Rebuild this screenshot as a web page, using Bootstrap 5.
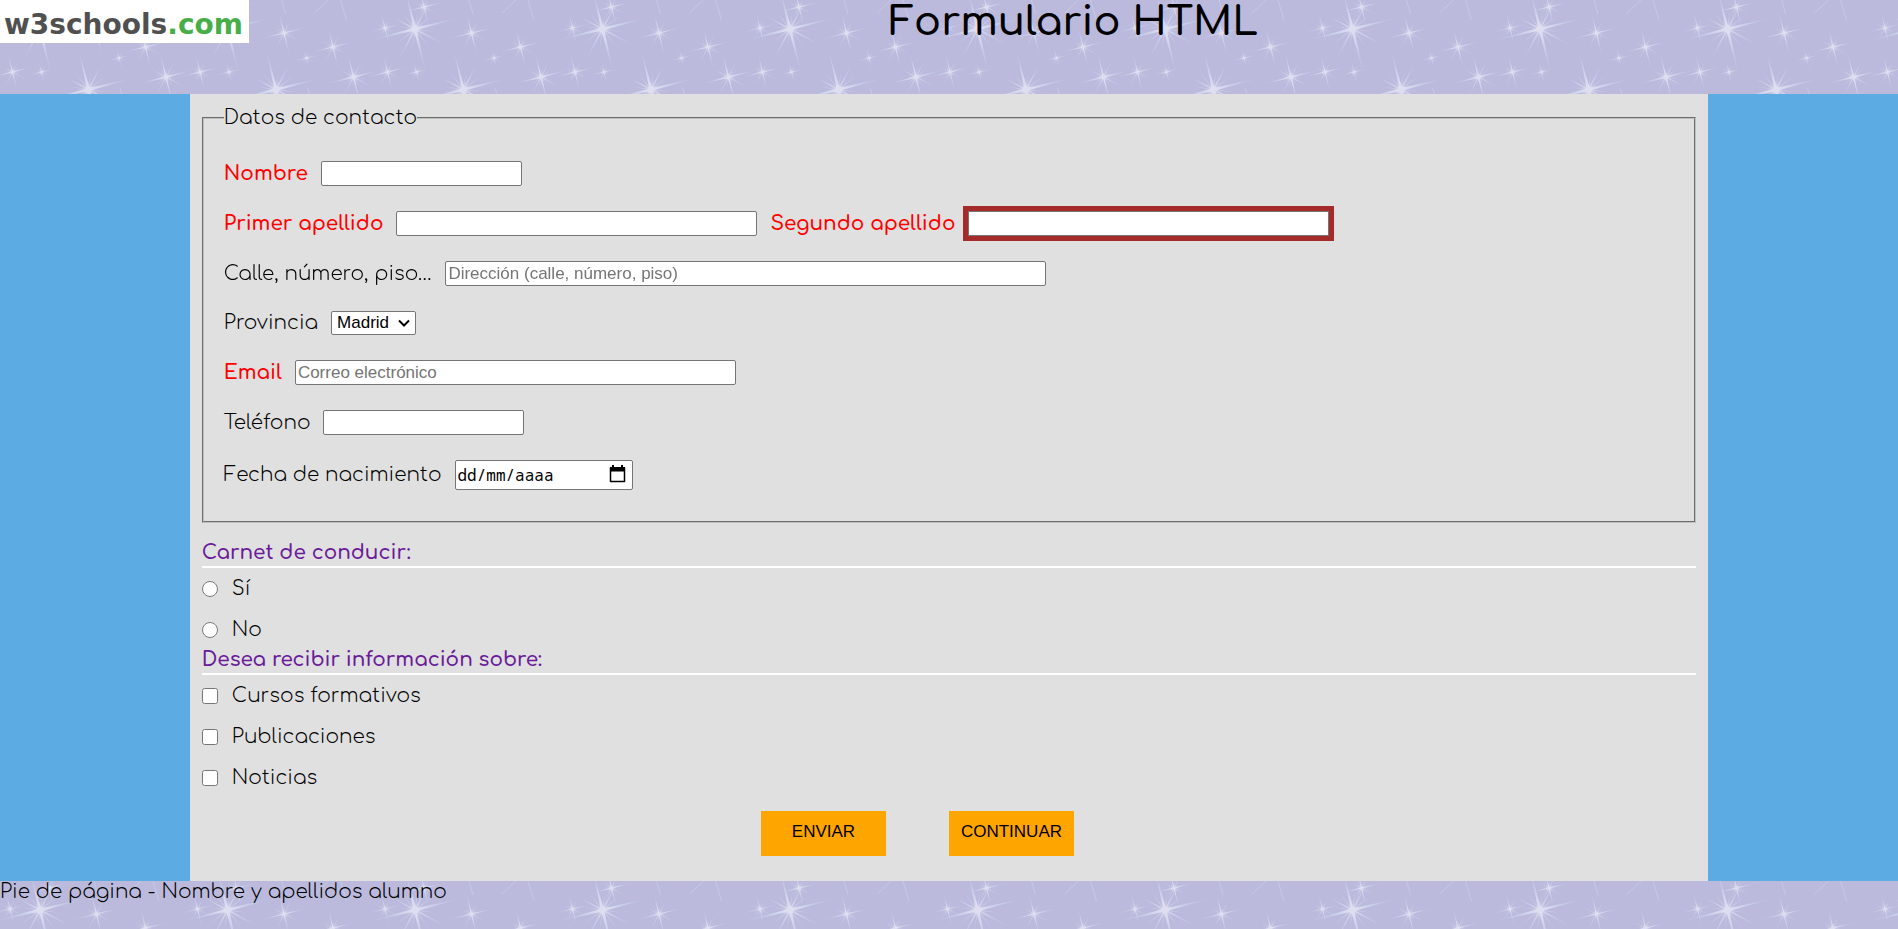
<!DOCTYPE html>
<html lang="es">
<head>
<meta charset="utf-8">
<meta name="viewport" content="width=device-width, initial-scale=1">
<title>Formulario HTML</title>
<link href="https://cdn.jsdelivr.net/npm/bootstrap@5.3.0/dist/css/bootstrap.min.css" rel="stylesheet">
<style>
  body {
    background-color: #5dabe3;
    color: #000;
    font-family: Comfortaa, Inter, sans-serif;
    font-size: 20px;
    font-weight: 300;
    line-height: 25px;
  }
  .stars {
    background-color: #bbbadd;
    background-size: 375px 188px;
    background-image: url("data:image/svg+xml,%3Csvg xmlns='http://www.w3.org/2000/svg' xmlns:xlink='http://www.w3.org/1999/xlink' width='375' height='188' viewBox='0 0 375 188'%3E%3Cdefs%3E%3CradialGradient id='g' gradientUnits='userSpaceOnUse' cx='0' cy='0' r='46'%3E%3Cstop offset='0' stop-color='%23e2e2f3'/%3E%3Cstop offset='.4' stop-color='%23ccd2ec' stop-opacity='.9'/%3E%3Cstop offset='1' stop-color='%23bcc4e4' stop-opacity='.3'/%3E%3C/radialGradient%3E%3Cg id='s' fill='url(%23g)'%3E%3Cpath d='M-46 0L0-1.600L46 0L0 1.600ZM0-38L1.600 0L0 46L-1.600 0Z' transform='rotate(-14)'/%3E%3Cpath d='M-24 0L0-1.200L34 0L0 1.200ZM0-26L1.200 0L0 34L-1.200 0Z' transform='rotate(28)' opacity='.7'/%3E%3Cpath d='M-22 0L0-.8L24 0L0 .8ZM0-22L.8 0L0 24L-.8 0Z' transform='rotate(52)' opacity='.5'/%3E%3Cpath d='M-18 0L0-.8L20 0L0 .8ZM0-18L.8 0L0 20L-.8 0Z' transform='rotate(8)' opacity='.5'/%3E%3Ccircle r='3.500' fill='%23dedef0'/%3E%3C/g%3E%3Cg id='t'%3E%3Cuse xlink:href='%23s' x='40' y='29'/%3E%3Cuse xlink:href='%23s' x='88.500' y='89.500'/%3E%3Cuse xlink:href='%23s' transform='translate(166 77) scale(.62)'/%3E%3Cuse xlink:href='%23s' transform='translate(96.500 33) scale(.52)'/%3E%3Cuse xlink:href='%23s' transform='translate(145.500 47) scale(.5)'/%3E%3Cuse xlink:href='%23s' transform='translate(49 7) scale(.45)'/%3E%3Cuse xlink:href='%23s' transform='translate(12.500 72) scale(.45)'/%3E%3Cuse xlink:href='%23s' transform='translate(10 28) scale(.4)'/%3E%3Cuse xlink:href='%23s' transform='translate(119 58) scale(.27)'/%3E%3Cuse xlink:href='%23s' transform='translate(41.500 72) scale(.3)'/%3E%3Cpath d='M94 0L98 14M153 0L159 20M127 13L141 0M120 88L122 94' stroke='%23c8cfea' stroke-width='1' opacity='.7' fill='none'/%3E%3C/g%3E%3C/defs%3E%3Cuse xlink:href='%23t' x='-187.500'/%3E%3Cuse xlink:href='%23t'/%3E%3Cuse xlink:href='%23t' x='187.500'/%3E%3Cuse xlink:href='%23t' x='375'/%3E%3C/svg%3E");
  }
  .site-header { min-height: 94px; }
  .site-footer { min-height: 48px; line-height: 22px; }
  .logo svg { display: block; }
  .page-title { font-size: 40px; font-weight: 600; line-height: 44px; }
  .page-main { width: 80%; background-color: #e0e0e0; padding: 11px 12px 25px; }
  .contact { border: 2px groove #c0c0c0; padding: 30px 20px 31px; }
  .contact legend { float: none; width: auto; font-size: 20px; line-height: 26px; }
  .fields { gap: 25px; }
  .pair { gap: 13px; }
  .pair label { line-height: 22px; }
  .required { color: #f00; font-weight: 600; }
  .field {
    height: 25px;
    border: 1px solid #767676;
    border-radius: 2px;
    background-color: #fff;
    color: #000;
    padding: 1px 2px;
    font: 400 17px "Liberation Sans", Arial, sans-serif;
  }
  .field::placeholder { color: #757575; opacity: 1; }
  .w-short { width: 201px; }
  .w-name { width: 361px; }
  .w-email { width: 441px; }
  .w-address { width: 601px; }
  .w-province { width: 85px; height: 24px; }
  .w-date { width: 178px; height: 30px; }
  .current { border-radius: 0; }
  .current, .field:focus { outline: 5px solid brown; }
  select.field {
    appearance: none;
    padding: 0 4px 1px 5px;
    background: #fff url("data:image/svg+xml,%3Csvg xmlns='http://www.w3.org/2000/svg' width='12' height='8'%3E%3Cpath d='M1 1.500L6 6.500L11 1.500' fill='none' stroke='%23000' stroke-width='2'/%3E%3C/svg%3E") no-repeat right 5px center;
  }
  .date-field { font-family: "Noto Sans Mono", "DejaVu Sans Mono", monospace; font-size: 16px; }
  .date-field::placeholder { color: #000; }
  .date-icon { right: 7px; top: 5px; }
  .section-title {
    color: #6a1b9a;
    font-size: 20px;
    font-weight: 600;
    line-height: 22px;
    border-bottom: 2px solid #fff;
    padding-bottom: 2px;
  }
  .contact + .section-title { margin-top: 19px; }
  .choices { gap: 16px; padding: 8px 0 7px; }
  .choice { gap: 14px; }
  .choice input { width: 16px; height: 16px; margin: 0; }
  .actions { padding-top: 14px; }
  .action {
    width: 125px;
    height: 45px;
    margin-right: 63px;
    border: 0;
    background-color: orange;
    color: #000;
    padding: 0 0 3px;
    font: 400 17px "Liberation Sans", Arial, sans-serif;
  }
</style>
</head>
<body>
<header class="site-header stars d-flex align-items-start">
  <a class="logo" href="#" aria-label="w3schools.com">
    <svg width="249" height="43" viewBox="0 0 249 43">
      <rect width="249" height="43" fill="#fff"/>
      <text x="4" y="34" font-family="DejaVu Sans" font-weight="700" font-size="28" fill="#505050">w3schools<tspan fill="#47ad47">.com</tspan></text>
    </svg>
  </a>
  <h1 class="page-title flex-fill text-center m-0">Formulario HTML</h1>
</header>

<main class="page-main mx-auto">
  <form>
    <fieldset class="contact">
      <legend class="p-0 m-0">Datos de contacto</legend>
      <div class="fields d-flex flex-column">
        <div class="pair d-flex align-items-center">
          <label class="required" for="nombre">Nombre</label>
          <input class="field w-short" id="nombre" type="text">
        </div>
        <div class="pair d-flex align-items-center">
          <label class="required" for="apellido1">Primer apellido</label>
          <input class="field w-name" id="apellido1" type="text">
          <label class="required" for="apellido2">Segundo apellido</label>
          <input class="field w-name current" id="apellido2" type="text" autofocus>
        </div>
        <div class="pair d-flex align-items-center">
          <label for="direccion">Calle, número, piso…</label>
          <input class="field w-address" id="direccion" type="text" placeholder="Dirección (calle, número, piso)">
        </div>
        <div class="pair d-flex align-items-center">
          <label for="provincia">Provincia</label>
          <select class="field w-province" id="provincia"><option>Madrid</option></select>
        </div>
        <div class="pair d-flex align-items-center">
          <label class="required" for="email">Email</label>
          <input class="field w-email" id="email" type="email" placeholder="Correo electrónico">
        </div>
        <div class="pair d-flex align-items-center">
          <label for="telefono">Teléfono</label>
          <input class="field w-short" id="telefono" type="tel">
        </div>
        <div class="pair d-flex align-items-center">
          <label for="fecha">Fecha de nacimiento</label>
          <div class="position-relative d-flex">
            <input class="field w-date date-field" id="fecha" type="text" placeholder="dd/mm/aaaa">
            <svg class="date-icon position-absolute" width="17" height="18" viewBox="0 0 17 18" aria-hidden="true">
              <path d="M1.500 3h14v13.500h-14z" fill="none" stroke="#000" stroke-width="1.500" stroke-linejoin="round"/>
              <path d="M1 2h15v4.500H1zM3 0h2v3H3zM12 0h2v3h-2z"/>
            </svg>
          </div>
        </div>
      </div>
    </fieldset>

    <h2 class="section-title mb-0">Carnet de conducir:</h2>
    <div class="choices d-flex flex-column">
      <div class="choice d-flex align-items-center">
        <input type="radio" name="carnet" id="carnet-si"><label for="carnet-si">Sí</label>
      </div>
      <div class="choice d-flex align-items-center">
        <input type="radio" name="carnet" id="carnet-no"><label for="carnet-no">No</label>
      </div>
    </div>

    <h2 class="section-title m-0">Desea recibir información sobre:</h2>
    <div class="choices d-flex flex-column">
      <div class="choice d-flex align-items-center">
        <input type="checkbox" id="cursos"><label for="cursos">Cursos formativos</label>
      </div>
      <div class="choice d-flex align-items-center">
        <input type="checkbox" id="publicaciones"><label for="publicaciones">Publicaciones</label>
      </div>
      <div class="choice d-flex align-items-center">
        <input type="checkbox" id="noticias"><label for="noticias">Noticias</label>
      </div>
    </div>

    <div class="actions d-flex justify-content-center">
      <button class="action" type="submit">ENVIAR</button>
      <button class="action" type="button">CONTINUAR</button>
    </div>
  </form>
</main>

<footer class="site-footer stars">Pie de página - Nombre y apellidos alumno</footer>
<script src="https://cdn.jsdelivr.net/npm/bootstrap@5.3.0/dist/js/bootstrap.bundle.min.js"></script>
</body>
</html>
